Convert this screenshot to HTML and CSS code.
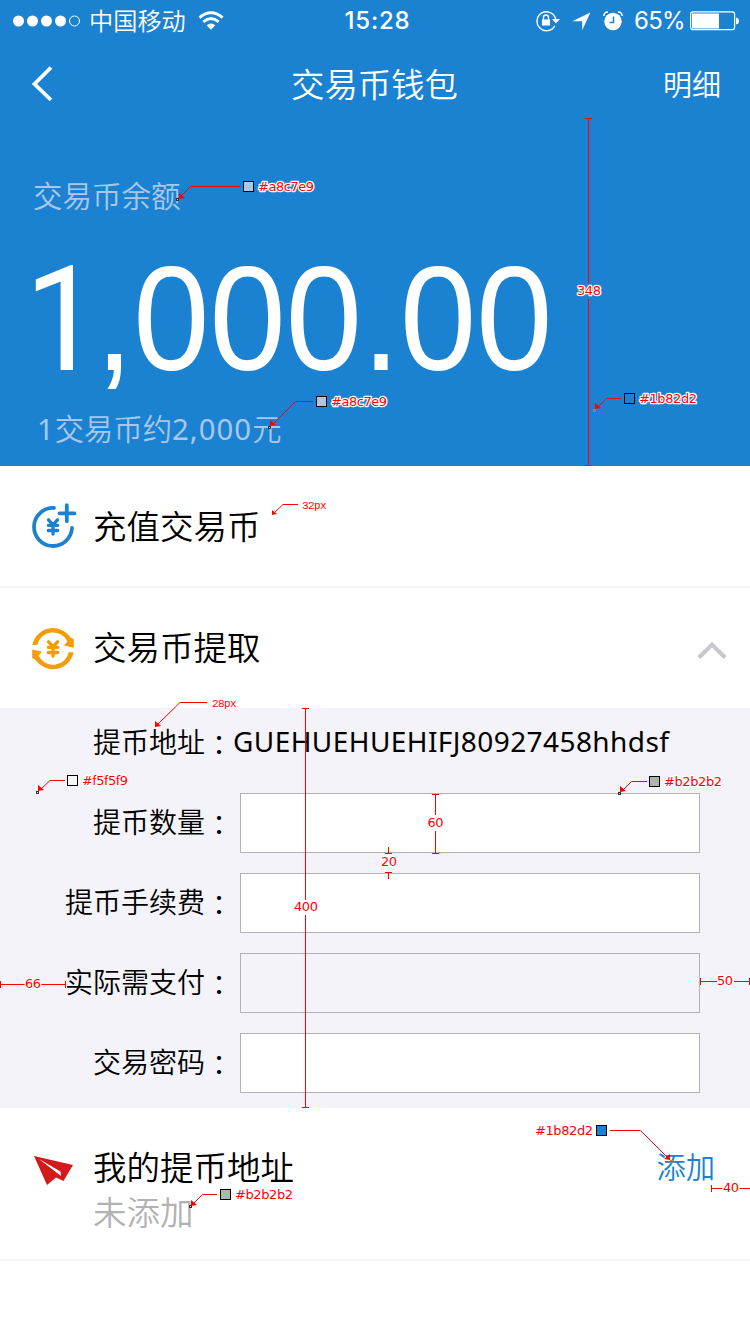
FILE: index.html
```html
<!DOCTYPE html>
<html lang="zh-CN">
<head>
<meta charset="utf-8">
<title>交易币钱包</title>
<link rel="stylesheet" href="styles.css">
</head>
<body>
<main class="screen">
  <header class="hero">
    <div class="status">
      <div class="status-left">
        <svg class="signal" width="68" height="14" viewBox="0 0 68 14"><g fill="#fff"><circle cx="5.5" cy="7" r="5.5"/><circle cx="19.5" cy="7" r="5.5"/><circle cx="33.5" cy="7" r="5.5"/><circle cx="47.5" cy="7" r="5.5"/></g><circle cx="61.5" cy="7" r="5" fill="none" stroke="#fff"/></svg>
        <span class="carrier">中国移动</span>
        <svg class="wifi" width="26" height="20" viewBox="0 0 26 20"><g fill="none" stroke="#fff" stroke-width="3"><path d="M1.400 6.600Q13 -3.200 24.600 6.600"/><path d="M5.300 10.800Q13 4.200 20.700 10.800"/></g><path d="M8.700 14.200Q13 10.600 17.300 14.200L13 18.800Z" fill="#fff"/></svg>
      </div>
      <span class="clock">15:28</span>
      <div class="status-right">
        <svg width="24" height="22" viewBox="0 0 24 22"><path d="M18.800 15.800A9.500 9.500 0 1 1 19.700 9" fill="none" stroke="#fff" stroke-width="1.400"/><path d="M16 9h8l-4 4.600z" fill="#fff"/><path d="M6 9.500h8v6H6z" fill="#fff"/><path d="M7.500 10V7.500a2.500 2.500 0 0 1 5 0V10" fill="none" stroke="#fff" stroke-width="1.400"/></svg>
        <svg class="locate" width="19" height="19" viewBox="0 0 19 19"><path d="M18.400 .5 10.200 18.300V9.300H.3Z" fill="#fff"/></svg>
        <svg class="alarm" width="20" height="20" viewBox="0 0 20 20"><circle cx="10" cy="10.500" r="8.700" fill="#fff"/><path d="M.8 5Q1 1 5 1M19.200 5Q19 1 15 1" fill="none" stroke="#fff" stroke-width="1.600"/><path d="M10.500 5.500v6H6.500" fill="none" stroke="#1b82d2" stroke-width="1.500"/></svg>
        <span class="percent">65%</span>
        <svg class="battery" width="50" height="20" viewBox="0 0 50 20"><rect x=".6" y=".9" width="44" height="17.800" rx="2.500" fill="none" stroke="#fff" stroke-width="1.200"/><path d="M2 2.500h27v15H2z" fill="#fff"/><path d="M46 6.500q3 .5 3 3.500t-3 3.500z" fill="#fff"/></svg>
      </div>
    </div>
    <nav class="nav">
      <svg class="back" width="22" height="36" viewBox="0 0 22 36"><path d="M20 1.500 3.500 18 20 34" fill="none" stroke="#fff" stroke-width="3.800"/></svg>
      <h1 class="title">交易币钱包</h1>
      <a class="detail">明细</a>
    </nav>
    <section class="balance">
      <div class="balance-label">交易币余额</div>
      <div class="amount"><span class="lead">1</span>,000.00</div>
      <div class="rate"><span class="figure">1</span>交易币约<span class="figure">2,000</span>元</div>
    </section>
  </header>

  <section class="row row-line">
    <svg class="row-icon" width="46" height="46" viewBox="0 0 46 46"><g fill="none" stroke="#1b82d2" stroke-linecap="round" stroke-width="3.800"><path d="M22 5A19 19 0 1 0 40 25"/><path d="M34.800 2.200v16M27.500 10.300h15"/></g><path d="m16.500 16.800 4.500 5 4.500-5M16.300 22.300h9.400M16.300 27.500h9.400M21 22v9" fill="none" stroke="#1b82d2" stroke-width="3.300" stroke-linecap="round"/></svg>
    <span class="row-title">充值交易币</span>
  </section>
  <section class="row">
    <svg class="row-icon" width="46" height="46" viewBox="0 0 46 46"><g fill="#f59b05"><path id="arc" d="M.4 20A21 21 0 0 1 38.500 12.400L41.800 14.300V22.800L32 20.500 35.500 16.400A16.200 16.200 0 0 0 5.200 20Z"/><use href="#arc" transform="rotate(180 21 23.600)"/></g><path d="m16.500 16.800 4.500 5 4.500-5M16.300 22.300h9.400M16.300 27.500h9.400M21 22v9" fill="none" stroke="#f59b05" stroke-width="3.300" stroke-linecap="round"/></svg>
    <span class="row-title row-title-up">交易币提取</span>
    <svg class="chevron" width="30" height="20" viewBox="0 0 30 20"><path d="M2 17.500 15 4.500 28 17.500" fill="none" stroke="#c7c7cc" stroke-width="4"/></svg>
  </section>

  <section class="form">
    <div class="field"><span class="label">提币地址<span class="colon" lang="zh-TW">：</span></span><span class="address">GUEHUEHUEHIFJ80927458hhdsf</span></div>
    <div class="field"><span class="label">提币数量<span class="colon" lang="zh-TW">：</span></span><span class="box"></span></div>
    <div class="field"><span class="label">提币手续费<span class="colon" lang="zh-TW">：</span></span><span class="box"></span></div>
    <div class="field"><span class="label">实际需支付<span class="colon" lang="zh-TW">：</span></span><span class="box box-readonly"></span></div>
    <div class="field"><span class="label">交易密码<span class="colon" lang="zh-TW">：</span></span><span class="box"></span></div>
  </section>

  <section class="mine">
    <svg class="plane" width="42" height="32" viewBox="0 0 42 32"><path d="M2 1 41 10 31.500 26 24 22.500 15 30ZM7 4 29 21 28.500 16.500Z" fill="#d2191c" fill-rule="evenodd"/></svg>
    <div class="mine-text"><span class="row-title mine-line">我的提币地址</span><span class="row-title mine-line muted">未添加</span></div>
    <a class="add">添加</a>
  </section>

  <svg class="notes" width="750" height="1334" viewBox="0 0 750 1334">
    <g fill="none" stroke="#f00" shape-rendering="crispEdges">
      <path d="M588.500 118v165M588.500 299v167M585 118.500h7M585 465.500h7"/>
      <path d="M435.500 795v20M435.500 831v22M432 794.500h7M432 853.500h7M388.500 847v6M385 853.500h7M385 872.500h7M388.500 873v6"/>
      <path d="M305.500 709v191M305.500 915v192M302 708.500h7M302 1107.500h7"/>
      <path d="M.5 981v7M1 984.500h24M41 984.500h24M65.500 981v7M700.500 978v7M701 981.500h16M734 981.500h15M749.500 978v7M711.500 1185v7M712 1188.500h11M739 1188.500h11"/>
    </g>
    <g fill="none" stroke="#f00">
      <path d="M240 186.500H190.500L181 196M313 401.500H295.500L272 425M621 398.500H606.500L597 408M298 504.500H283L273 514M207 702.500H180L156 726M65 780.500H50L40 790M647 781.500H631.500L622 791M217 1194.500H202.500L192 1205M610 1130.500H640.500L669 1159"/>
    </g>
    <g fill="#f00">
      <path d="M179 199v-6l6 5zM270 426v-6l6 5zM595 409v-6l6 5zM272 515v-5l5 4zM155 727v-6l6 5zM38 791v-6l6 5zM620 792v-6l6 5zM191 1206v-6l6 5zM670 1160v-6l-6 5z"/>
    </g>
    <g fill="none" stroke="#333" shape-rendering="crispEdges">
      <path d="M176.500 198.500h2v2h-2zM268.500 426.500h2v2h-2zM36.500 791.500h2v2h-2zM618.500 792.500h2v2h-2zM189.500 1205.500h2v2h-2z"/>
      <path d="M593.500 409.500h2v2h-2zM670.500 1160.500h2v2h-2z" stroke="#c87832"/>
    </g>
    <g stroke="#000" shape-rendering="crispEdges">
      <path d="M243.500 181.500h10v10h-10zM316.500 396.500h10v10h-10z" fill="#a8c7e9"/>
      <path d="M624.500 393.500h10v10h-10zM596.500 1125.500h10v10h-10z" fill="#1b82d2"/>
      <path d="M67.500 775.500h10v10h-10z" fill="#f5f5f9"/>
      <path d="M649.500 776.500h10v10h-10zM220.500 1189.500h10v10h-10z" fill="#b2b2b2"/>
    </g>
    <g class="note-text">
      <text x="258" y="191" textLength="56">#a8c7e9</text>
      <text x="331" y="406" textLength="56">#a8c7e9</text>
      <text x="639" y="403" textLength="58">#1b82d2</text>
      <text x="577" y="295" textLength="24">348</text>
      <text x="82" y="785" textLength="46">#f5f5f9</text>
      <text x="664" y="786" textLength="58">#b2b2b2</text>
      <text x="427.500" y="827" textLength="16">60</text>
      <text x="381" y="866" textLength="16">20</text>
      <text x="294" y="911" textLength="24">400</text>
      <text x="25" y="988" textLength="16">66</text>
      <text x="717" y="985" textLength="16">50</text>
      <text x="723" y="1192" textLength="16">40</text>
      <text x="535" y="1135" textLength="58">#1b82d2</text>
      <text x="235" y="1199" textLength="58">#b2b2b2</text>
    </g>
    <g class="note-small"><text x="302" y="509">32px</text><text x="212" y="707">28px</text></g>
  </svg>
</main>
</body>
</html>
```
FILE: styles.css
```css
* { box-sizing: border-box; }
body { margin: 0; background: #fff; }
.screen {
  position: relative;
  width: 750px;
  height: 1334px;
  overflow: hidden;
  background: #fff;
  color: #000;
  font-family: "Noto Sans", "Noto Sans CJK SC", sans-serif;
  font-weight: 350;
}
svg { display: block; flex: none; }
h1 { margin: 0; font-weight: 350; }

.hero { height: 466px; background: #1b82d2; color: #fff; }
.status {
  display: grid;
  grid-template-columns: 1fr auto 1fr;
  align-items: center;
  height: 40px;
  padding: 0 11px 0 13px;
}
.status-left, .status-right { display: flex; align-items: center; }
.status-right { justify-content: flex-end; }
.carrier { margin-left: 8px; font-size: 24.2px; line-height: 40px; white-space: nowrap; }
.wifi { margin: 0 0 0 12px; }
.clock { padding-left: 3px; font: 550 24px/42px Inter, sans-serif; letter-spacing: .8px; }
.locate { margin-left: 12px; }
.alarm { margin-left: 12px; }
.percent { margin: 0 5px 0 11px; font: 400 24px/42px Inter, sans-serif; letter-spacing: -.7px; }
.battery { margin-right: -1px; }

.nav {
  display: grid;
  grid-template-columns: 1fr auto 1fr;
  align-items: center;
  height: 88px;
  padding: 0 29px 0 31px;
}
.title { margin-left: -3px; font-size: 33.4px; line-height: 48px; }
.detail { justify-self: end; margin-top: 2px; font-size: 29px; line-height: 42px; }

.balance { display: flex; flex-direction: column; align-items: flex-start; padding: 47px 0 0 33px; color: #a8c7e9; }
.balance-label { font-size: 29.5px; line-height: 42px; }
.amount {
  height: 130px;
  margin: 37px 0 0 -14px;
  color: #fff;
  font: 400 148px/130px "Liberation Sans", sans-serif;
  transform: scaleX(.926);
  transform-origin: 0 50%;
  white-space: nowrap;
}
/* Roboto draws the figure one without a foot. */
.lead {
  display: inline-block;
  width: 82.300px;
  text-indent: 6px;
  font-family: Roboto, sans-serif;
  font-size: 147px;
  line-height: 130px;
}
.rate { margin: 24px 0 0 4px; font-size: 29.3px; line-height: 42px; }
.figure { font-weight: 400; letter-spacing: 1.05px; }

.row { display: flex; align-items: center; height: 120px; padding: 0 23px 0 32px; }
.row-line { height: 122px; border-bottom: 2px solid #f4f3f9; }
.row-icon { margin-right: 15px; }
.row-title { font-size: 33.5px; line-height: 48px; }
.row-title-up { margin-top: -2px; }
.chevron { margin: 3px 0 0 auto; }

.form {
  display: grid;
  grid-auto-rows: 60px;
  row-gap: 20px;
  height: 400px;
  padding: 5px 50px 15px 0;
  background: #f4f3f9;
}
.field { display: flex; align-items: center; }
.label { width: 233px; height: 60px; font-size: 28px; line-height: 58px; text-align: right; white-space: nowrap; }
.colon { font-family: "Noto Sans CJK TC", sans-serif; line-height: 1; vertical-align: -3px; }
.address { height: 60px; font-size: 28px; font-weight: 400; line-height: 56px; letter-spacing: .42px; }
.box { flex: 1; height: 60px; margin-left: 7px; border: 1px solid #b2b2b2; background: #fff; }
.box-readonly { background: transparent; }

.mine {
  display: flex;
  align-items: flex-start;
  height: 153px;
  padding: 36px 35px 0 32px;
  border-bottom: 2px solid #f4f3f9;
}
.plane { margin: 11px 19px 0 0; }
.mine-text { display: flex; flex-direction: column; padding-top: 1px; }
.mine-line { line-height: 45px; }
.muted { color: #b2b2b2; }
.add { margin-left: auto; padding-top: 1px; color: #1b82d2; font-size: 29.300px; line-height: 45px; }

.notes { position: absolute; top: 0; left: 0; }
.note-text {
  fill: #f00;
  stroke: #fff;
  stroke-width: 2.5px;
  stroke-linejoin: round;
  paint-order: stroke;
  font: 400 13px "DejaVu Sans", sans-serif;
}
.note-small { fill: #f00; font: 400 11px "Liberation Mono", monospace; letter-spacing: -.6px; }
```
